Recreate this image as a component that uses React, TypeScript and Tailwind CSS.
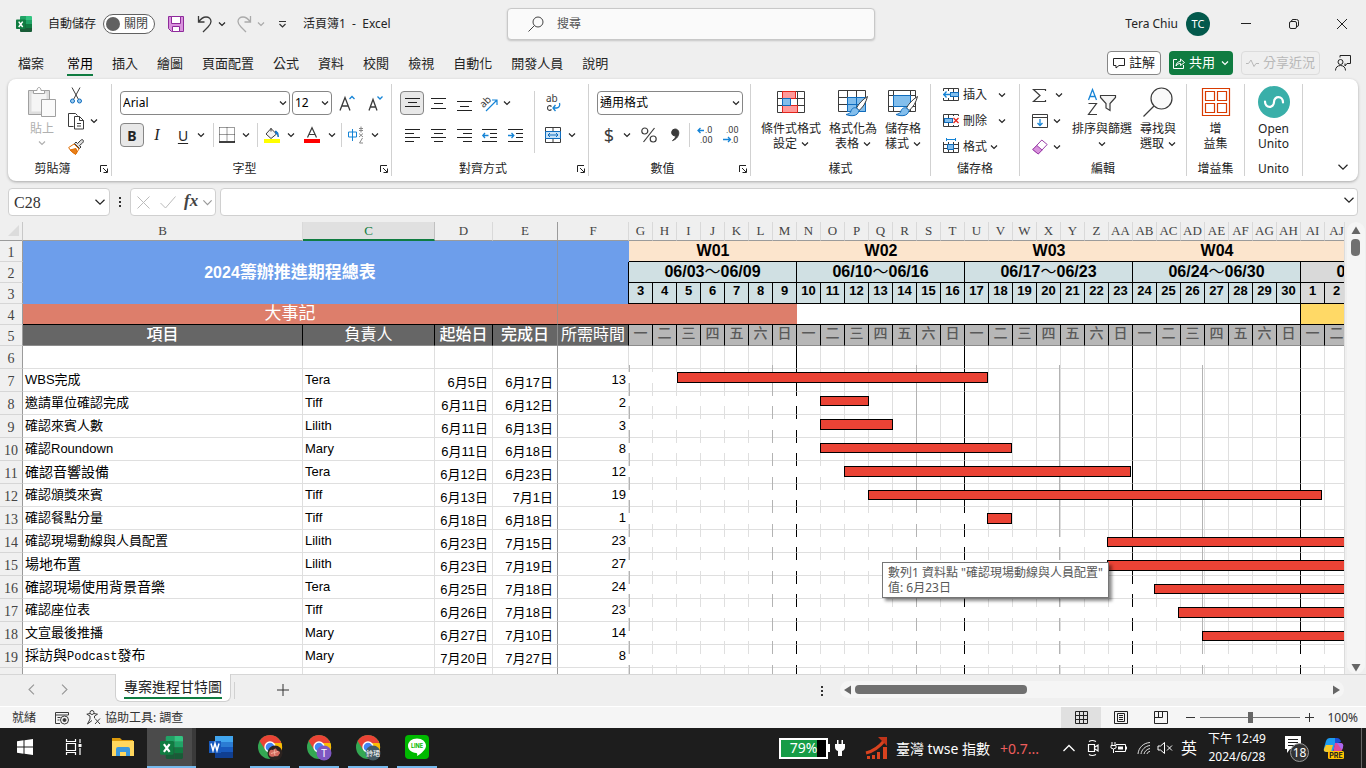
import React from "react";

const UI = "font-['Noto_Sans','Noto_Sans_CJK_TC',sans-serif]";

/* ---------- small shared pieces ---------- */

function Chevron({ className = "", size = 8 }: { className?: string; size?: number }) {
  return (
    <svg width={size} height={size} viewBox="0 0 8 8" fill="none" stroke="currentColor" strokeWidth="1.2" className={className} aria-hidden="true">
      <path d="M1 2.500 4 5.500 7 2.500" vectorEffect="non-scaling-stroke" />
    </svg>
  );
}

function Svg({ w = 20, h = 20, children, className = "" }: { w?: number; h?: number; children: React.ReactNode; className?: string }) {
  return (
    <svg width={w} height={h} viewBox={`0 0 ${w} ${h}`} fill="none" stroke="#3b3b3b" strokeWidth="1" className={`shrink-0 overflow-visible ${className}`} aria-hidden="true">
      {children}
    </svg>
  );
}

function Btn({ label, className = "", children }: { label: string; className?: string; children: React.ReactNode }) {
  return (
    <button type="button" aria-label={label} className={`flex h-6 shrink-0 items-center justify-center ${className}`}>
      {children}
    </button>
  );
}

function More({ label, className = "w-[10px]" }: { label: string; className?: string }) {
  return (
    <Btn label={label} className={className}>
      <Chevron className="shrink-0" />
    </Btn>
  );
}

function Sep({ className = "" }: { className?: string }) {
  return <span className={`w-px shrink-0 bg-[#d1d1d1] ${className}`} />;
}

function Group({ label, width, launcher = false, children }: { label: string; width: string; launcher?: boolean; children: React.ReactNode }) {
  return (
    <section aria-label={label} className={`flex shrink-0 ${width}`}>
      <div className="flex min-w-0 flex-1 flex-col">
        {children}
        <div className="mt-auto flex items-center pb-1">
          <span className="flex-1 text-center leading-4">{label}</span>
          {launcher && (
            <button type="button" aria-label={`${label}設定`} className="mr-[3px] ml-[3px]">
              <Svg w={8} h={8}>
                <path d="M.5 7V.5H7M3 3l4 4M7.500 3.500v4h-4" stroke="#222" />
              </Svg>
            </button>
          )}
        </div>
      </div>
      <Sep className="my-[5px]" />
    </section>
  );
}

function BigButton({ icon, lines, more = false, className = "" }: { icon: React.ReactNode; lines: string[]; more?: boolean; className?: string }) {
  return (
    <button type="button" className={`flex shrink-0 flex-col items-center pt-2 whitespace-nowrap ${className}`}>
      <span className="mb-1 flex h-[30px] items-center">{icon}</span>
      {lines.map((l, i) => (
        <span key={i} className="flex h-[15px] items-center gap-1 leading-[15px]">
          {l}
          {more && i === lines.length - 1 && <Chevron />}
        </span>
      ))}
    </button>
  );
}

function Combo({ label, value, className }: { label: string; value: string; className: string }) {
  return (
    <div className={`relative h-6 shrink-0 ${className}`}>
      <select aria-label={label} defaultValue={value} className="h-6 w-full appearance-none rounded border border-[#868686] bg-white pl-[2px] text-[12px] text-black">
        <option>{value}</option>
      </select>
      <Chevron className="pointer-events-none absolute top-2 right-[3px]" />
    </div>
  );
}

/* ---------- title bar ---------- */

function ExcelLogo({ size }: { size: number }) {
  return (
    <svg width={size} height={size} viewBox="0 0 16 16" aria-hidden="true">
      <path d="M4 1a1 1 0 0 1 1-1h5v4H4z" fill="#21a366" />
      <path d="M10 0h5a1 1 0 0 1 1 1v3h-6z" fill="#33c481" />
      <path d="M4 4h6v4H4z" fill="#107c41" />
      <path d="M10 4h6v4h-6z" fill="#21a366" />
      <path d="M4 8h6v8H5a1 1 0 0 1-1-1z" fill="#185c37" />
      <path d="M10 8h6v4h-6z" fill="#107c41" />
      <path d="M10 12h6v3a1 1 0 0 1-1 1h-5z" fill="#185c37" />
      <rect y="3.500" width="9.500" height="9.500" rx=".8" fill="#107c41" />
      <path d="m2.700 5.600 4 5.400M6.700 5.600l-4 5.400" stroke="#fff" strokeWidth="1.500" />
    </svg>
  );
}

function TitleBar() {
  return (
    <header className="grid h-12 shrink-0 grid-cols-[507fr_368fr_491fr] items-center text-[12px]">
      <div className="flex items-center whitespace-nowrap">
        <span className="ml-4"><ExcelLogo size={16} /></span>
        <span className="ml-4">自動儲存</span>
        <button type="button" role="switch" aria-checked="false" aria-label="自動儲存" className="ml-[7px] flex h-5 w-[52px] items-center gap-1 rounded-full border border-[#616161] bg-white pl-[2px] leading-none text-[#444]">
          <span className="h-[14px] w-[14px] rounded-full bg-[#616161]" />
          關閉
        </button>
        <button type="button" aria-label="儲存檔案" className="ml-[13px]">
          <Svg w={16} h={16}>
            <path d="M.5.5h15v15h-12l-3-3z" fill="#d993dd" stroke="#8e2a9b" />
            <path d="M3.500.5h9v7h-9zM4.500 10.500h7v5h-7z" fill="#fff" stroke="#8e2a9b" />
          </Svg>
        </button>
        <button type="button" aria-label="復原" className="ml-[13px]">
          <Svg w={16} h={18}>
            <path d="M1.500 1v6h6M1.500 7C4 3.500 6.500 2 9 2c3 0 5 2 5 4.500 0 2-1 3.500-3 5.500L6 17" strokeWidth="1.300" />
          </Svg>
        </button>
        <Chevron className="ml-[5px]" />
        <button type="button" aria-label="取消復原" className="ml-[10px] text-[#b0b0b0]">
          <Svg w={16} h={18}>
            <path d="M14.500 1v6h-6M14.500 7C12 3.500 9.500 2 7 2 4 2 2 4 2 6.500c0 2 1 3.500 3 5.500l5 5" stroke="#aaa" strokeWidth="1.300" />
          </Svg>
        </button>
        <Chevron className="ml-[5px] text-[#aaa]" />
        <button type="button" aria-label="自訂快速存取工具列" className="ml-[13px]">
          <Svg w={9} h={8}>
            <path d="M1 1.500h7M1.500 4l3 3 3-3" stroke="#333" strokeWidth="1.200" />
          </Svg>
        </button>
        <span className="ml-4">活頁簿1&nbsp; -&nbsp; Excel</span>
      </div>
      <label className="flex h-8 items-center rounded border border-[#c8c8c8] bg-[#fafafa] shadow-[0_1px_2px_rgba(0,0,0,.18)]">
        <Svg w={16} h={16} className="ml-5">
          <circle cx="10" cy="6" r="5" stroke="#444" />
          <path d="m6.500 9.500-6 6" stroke="#444" />
        </Svg>
        <input aria-label="搜尋" placeholder="搜尋" className="ml-[13px] min-w-0 flex-1 bg-transparent text-[12px] outline-none placeholder:text-[#555]" />
      </label>
      <div className="flex items-center justify-end">
        <span>Tera Chiu</span>
        <span className="mr-3 ml-2 flex h-6 w-6 items-center justify-center rounded-full bg-[#03594c] text-[11px] text-white">TC</span>
        <Btn label="最小化" className="w-12"><Svg w={10} h={10}><path d="M0 4.500h10" stroke="#222" /></Svg></Btn>
        <Btn label="還原" className="w-12">
          <Svg w={10} h={10}>
            <rect x=".5" y="2.500" width="7" height="7" rx="1.500" stroke="#222" />
            <path d="M2.500 2.500V2Q2.700.5 4 .5h3.500q2 0 2 2V6q0 1.500-1.500 1.500h-.5" stroke="#222" />
          </Svg>
        </Btn>
        <Btn label="關閉" className="w-12"><Svg w={10} h={10}><path d="m0 0 10 10M10 0 0 10" stroke="#222" /></Svg></Btn>
      </div>
    </header>
  );
}

/* ---------- tab strip ---------- */

const TABS = ["插入", "繪圖", "頁面配置", "公式", "資料", "校閱", "檢視", "自動化", "開發人員", "說明"];

function TabStrip() {
  return (
    <nav className="flex h-[31px] shrink-0 items-center text-[13px] leading-[22px] whitespace-nowrap">
      <button type="button" className="mr-[23px] ml-[18px] border-b-2 border-transparent">檔案</button>
      <button type="button" className="border-b-2 border-[#107c41] text-black">常用</button>
      {TABS.map((t) => (
        <button key={t} type="button" className="ml-[19px] border-b-2 border-transparent">{t}</button>
      ))}
      <div className="mr-[15px] mb-[2px] ml-auto flex items-center gap-2 leading-none">
        <button type="button" className="flex h-6 items-center gap-1 rounded border border-[#868686] bg-white px-[5px]">
          <Svg w={12} h={12}><path d="M.5 1.500h11v7H6l-3 2.500V8.500H.5z" stroke="#222" /></Svg>
          註解
        </button>
        <button type="button" className="flex h-6 items-center gap-1 rounded bg-[#107c41] px-1 text-white">
          <Svg w={12} h={12}>
            <path d="M4 2.500H.5v9h10V8M3 9c.3-3 2-4.500 4.500-4.500V2L11.500 5.500 7.500 8.500V6.500C5.500 6.500 4 7.200 3 9z" stroke="#fff" />
          </Svg>
          共用
          <Chevron className="ml-[2px]" />
        </button>
        <button type="button" disabled className="flex h-6 items-center gap-1 rounded border border-[#dcdcdc] px-1 text-[#b8b8b8]">
          <Svg w={13} h={12}><path d="M0 6.500h2.500L5 3l3 6.500 2-3h3" stroke="#b8b8b8" /></Svg>
          分享近況
        </button>
        <button type="button" aria-label="意見反應" className="ml-[7px]">
          <Svg w={16} h={16}>
            <circle cx="5.500" cy="7" r="2.500" stroke="#222" />
            <path d="M.5 15.500c0-3 2-5 5-5s5 2 5 5M5 2.500v-2h10.500v8H12l-2 2.500V8.500" stroke="#222" />
          </Svg>
        </button>
      </div>
    </nav>
  );
}

/* ---------- ribbon ---------- */

function Lines({ d }: { d: string }) {
  return <Svg w={15} h={17}><path d={d} stroke="#222" /></Svg>;
}

function Brush() {
  return (
    <>
      <path d="M29.500 7.500c-5 3-9 7.500-11 11.500l2.500 2.500c4-3 7-8 8.500-14z" fill="#fff" stroke="#3b3b3b" />
      <path d="M18.500 19c-3-1-5 1-5.500 3-.5 2-2 3-5 3.500 5 2 12 2 13-4z" fill="#83beec" stroke="#0f6cbd" />
    </>
  );
}

function Ribbon() {
  return (
    <div className="mx-2 flex h-[102px] shrink-0 rounded-lg bg-white text-[12px] text-[#242424] shadow-[0_1px_3px_rgba(0,0,0,.3)]">
      <Group label="剪貼簿" width="w-[104px]" launcher>
        <div className="flex pl-4">
          <button type="button" disabled className="flex w-9 flex-col items-center pt-2 text-[#b0b0b0]">
            <Svg w={28} h={31}>
              <path d="M.5 3.500h21v24H.5z" fill="#dedede" stroke="#a0a0a0" />
              <path d="M3.500 6.500h15v18h-15z" fill="#f5f5f5" stroke="none" />
              <path d="M5.500 6.500v-3h3.500c0-4 4-4 4 0h3.500v3z" fill="#fff" stroke="#a0a0a0" />
              <path d="M13.500 12.500h14v17h-14z" fill="#fafafa" stroke="#a0a0a0" />
            </Svg>
            <span className="mt-[3px] leading-[15px]">貼上</span>
            <Chevron className="mt-[3px]" />
          </button>
          <div className="flex flex-col pt-1 pl-2">
            <Btn label="剪下" className="w-4">
              <Svg w={12} h={17}>
                <path d="m2 .5 6.500 12M10 .5 3.500 12.500" />
                <circle cx="2.500" cy="14" r="2" fill="#9ccbf0" stroke="#0f6cbd" />
                <circle cx="9.500" cy="14" r="2" fill="#9ccbf0" stroke="#0f6cbd" />
              </Svg>
            </Btn>
            <div className="mt-[2px] flex">
              <Btn label="複製" className="w-4">
                <Svg w={16} h={17}>
                  <path d="M5.500 13.500h-5V.5h7l2 2M6.500 3.500h5l4 4v8.500h-9zM11.500 3.500v4h4M9 10.500h4M9 13h4" fill="#fff" />
                </Svg>
              </Btn>
              <More label="複製選項" className="ml-[5px] w-[10px]" />
            </div>
            <Btn label="複製格式" className="mt-[2px] w-4">
              <Svg w={16} h={16}>
                <path d="M15 1c-1-1-2 0-3 1L9.500 4.500 8 3 6.500 4.500l5 5L13 8l-1.500-1.500L14.500 4c1-1 1.200-2.200.5-3z" fill="#ddd" />
                <path d="M6 5 .7 8.500c1.500 3 3.500 5 7 6.500L11 10z" fill="#fff" stroke="#e06c00" />
                <path d="m2 11 6-1.500 1 3.500-1.500 2.500z" fill="#e8801a" stroke="#e06c00" />
              </Svg>
            </Btn>
          </div>
        </div>
      </Group>

      <Group label="字型" width="w-[280px]" launcher>
        <div className="flex flex-col gap-2 pt-3 pl-2">
          <div className="flex gap-[2px]">
            <Combo label="字型" value="Arial" className="w-[170px]" />
            <Combo label="字型大小" value="12" className="w-10" />
            <Btn label="放大字型" className="w-[26px]">
              <Svg w={16} h={18}><path d="m1 16.500 5-13 5 13M2.800 12h6.500" strokeWidth="1.300" /><path d="m10.500 5 2.500-2.500L15.500 5" stroke="#1584d6" strokeWidth="1.300" /></Svg>
            </Btn>
            <Btn label="縮小字型" className="w-[26px]">
              <Svg w={16} h={18}><path d="m2 16.500 4-11 4 11M3.300 13h5.500" strokeWidth="1.300" /><path d="m10.500 2.500 2.500 2.500 2.500-2.500" stroke="#1584d6" strokeWidth="1.300" /></Svg>
            </Btn>
          </div>
          <div className="flex">
            <Btn label="粗體" className="w-6 rounded border border-[#868686] bg-[#e8e8e8] text-[14px] font-bold">B</Btn>
            <Btn label="斜體" className="w-[26px] font-['Liberation_Serif',serif] text-[16px] italic">I</Btn>
            <Btn label="底線" className="w-[26px] text-[14px] underline underline-offset-2">U</Btn>
            <More label="底線選項" />
            <Sep className="ml-[7px]" />
            <Btn label="框線" className="w-[26px]">
              <Svg w={16} h={16}>
                <path d="M.5.5h15v14M.5.5v14M8 .5v14M.5 7.500h15" strokeDasharray="1 1" />
                <path d="M0 15h16" stroke="#000" strokeWidth="1.500" />
              </Svg>
            </Btn>
            <More label="框線選項" className="w-3" />
            <Sep className="ml-[5px]" />
            <Btn label="填滿色彩" className="w-7">
              <Svg w={16} h={16}>
                <path d="m7 1.500 5.500 5.500L7 11.500 2 7zM7 4.500V1" fill="#f4f4f4" />
                <path d="M11.500 4c2 .5 3 2 2.700 6-.2-2-1-3-2.500-3.500z" fill="#1584d6" stroke="#0f6cbd" />
                <path d="M0 14h16" stroke="#ffff00" strokeWidth="4" />
              </Svg>
            </Btn>
            <More label="填滿色彩選項" />
            <Btn label="字型色彩" className="w-[32px]">
              <Svg w={16} h={16}>
                <path d="M3.500 10.500 8 .8l4.500 9.700M5 7.500h6" strokeWidth="1.200" />
                <path d="M0 14h16" stroke="#f00" strokeWidth="4" />
              </Svg>
            </Btn>
            <More label="字型色彩選項" className="w-2" />
            <Sep className="ml-[5px]" />
            <Btn label="顯示注音標示" className="w-[28px]">
              <Svg w={16} h={18}>
                <path d="M.5 6h8v5h-8zM4.500 3v12" stroke="#1584d6" />
                <path d="M11 2.500h4M11 4.500h4M13 .5v6M11 7.500l4 3.500M15 7.500 11 11M14.500 12l-3 5h3.500" stroke="#888" />
              </Svg>
            </Btn>
            <More label="注音選項" />
          </div>
        </div>
      </Group>

      <Group label="對齊方式" width="w-[197px]" launcher>
        <div className="flex pt-3 pl-2">
          <div className="flex flex-col gap-2">
            <div className="flex">
              <Btn label="靠上對齊" className="w-6 rounded border border-[#868686] bg-[#e8e8e8]"><Lines d="M0 3.500h15M3 7.500h9M0 11.500h15" /></Btn>
              <Btn label="置中對齊" className="w-7"><Lines d="M0 3.500h15M3 8.500h9M0 13.500h15" /></Btn>
              <Btn label="靠下對齊" className="w-6"><Lines d="M0 6.500h15M3 11.500h9M0 15.500h15" /></Btn>
              <Btn label="方向" className="w-[26px]">
                <Svg w={17} h={17}>
                  <g transform="rotate(-45 6 7)"><text x="-1" y="9" fontSize="10" fill="#3b3b3b" stroke="none" fontFamily="Noto Sans">ab</text></g>
                  <path d="m5 16 10.500-10.500M11 5h5v5" stroke="#1584d6" strokeWidth="1.200" />
                </Svg>
              </Btn>
              <More label="方向選項" />
            </div>
            <div className="flex">
              <Btn label="靠左" className="w-6"><Lines d="M0 2.500h15M0 6.500h9M0 10.500h15M0 14.500h9" /></Btn>
              <Btn label="置中" className="w-7"><Lines d="M0 2.500h15M3 6.500h9M0 10.500h15M3 14.500h9" /></Btn>
              <Btn label="靠右" className="w-6"><Lines d="M0 2.500h15M6 6.500h9M0 10.500h15M6 14.500h9" /></Btn>
              <Btn label="減少縮排" className="w-[26px]">
                <Svg w={15} h={17}><path d="M0 2.500h15M8 6.500h7M8 10.500h7M0 14.500h15" stroke="#222" /><path d="M6.500 8.500H1M3 6 .8 8.500 3 11" stroke="#1584d6" strokeWidth="1.300" /></Svg>
              </Btn>
              <Btn label="增加縮排" className="w-[26px]">
                <Svg w={15} h={17}><path d="M0 2.500h15M8 6.500h7M8 10.500h7M0 14.500h15" stroke="#222" /><path d="M0 8.500h5.500M3.500 6 5.800 8.500 3.500 11" stroke="#1584d6" strokeWidth="1.300" /></Svg>
              </Btn>
            </div>
          </div>
          <Sep className="ml-[6px] h-[62px]" />
          <div className="flex flex-col gap-2 pl-[6px]">
            <Btn label="自動換行" className="w-6">
              <Svg w={16} h={20}>
                <text x="1" y="9" fontSize="10" fill="#3b3b3b" stroke="none" fontFamily="Noto Sans">ab</text>
                <path d="M6.500 13.500c-1.500-1.500-4-1-4 1.500s2.500 3 4 1.500" strokeWidth="1.100" />
                <path d="M14.500 10c1 3-1 5-3 5H8M10.500 12 8 15l2.500 3" stroke="#1584d6" strokeWidth="1.300" />
              </Svg>
            </Btn>
            <div className="flex">
              <Btn label="跨欄置中" className="w-6">
                <Svg w={16} h={16}>
                  <path d="M.5.5h15v15H.5zM8 .5V4M8 12v3.500" />
                  <path d="M.5 4.500h15v7H.5z" fill="#c7e2f8" stroke="#0f6cbd" />
                  <path d="M3 8h10M5 6 3 8l2 2M11 6l2 2-2 2" stroke="#0f6cbd" />
                </Svg>
              </Btn>
              <More label="跨欄選項" className="ml-[2px] w-[10px]" />
            </div>
          </div>
        </div>
      </Group>

      <Group label="數值" width="w-[162px]" launcher>
        <div className="flex flex-col gap-2 pt-3 pl-2">
          <Combo label="數值格式" value="通用格式" className="w-[146px]" />
          <div className="flex">
            <Btn label="會計數字格式" className="w-6 text-[18px] text-[#3b3b3b]">$</Btn>
            <More label="會計選項" className="w-3" />
            <Btn label="百分比樣式" className="ml-[2px] w-7">
              <Svg w={16} h={16}><circle cx="3.800" cy="4" r="3" strokeWidth="1.200" /><circle cx="12.200" cy="12" r="3" strokeWidth="1.200" /><path d="m13.500 1-11 14" strokeWidth="1.200" /></Svg>
            </Btn>
            <Btn label="千分位樣式" className="w-6">
              <Svg w={10} h={14}><path d="M5 1a3.500 3.500 0 0 0-1 6.800c.8.200 1.500.1 2-.2-.3 2-1.500 3.500-3.500 5C6 11.500 8.800 8.500 8.800 4.800 8.800 2.500 7.200 1 5 1z" fill="#3b3b3b" /></Svg>
            </Btn>
            <Sep className="mr-[2px] ml-[2px]" />
            <Btn label="增加小數位數" className="w-[26px]">
              <Svg w={17} h={20}>
                <path d="M7 5.500H1M3.500 3 1 5.500 3.500 8" stroke="#1584d6" strokeWidth="1.300" />
                <text x="8" y="8" fontSize="9" fill="#3b3b3b" stroke="none" fontFamily="Roboto">.0</text>
                <text x="3" y="18" fontSize="9" fill="#3b3b3b" stroke="none" fontFamily="Roboto">.00</text>
              </Svg>
            </Btn>
            <Btn label="減少小數位數" className="w-[26px]">
              <Svg w={17} h={20}>
                <text x="3" y="8" fontSize="9" fill="#3b3b3b" stroke="none" fontFamily="Roboto">.00</text>
                <path d="M0 14.500h7M5 12l2.500 2.500L5 17" stroke="#1584d6" strokeWidth="1.300" />
                <text x="8" y="18" fontSize="9" fill="#3b3b3b" stroke="none" fontFamily="Roboto">.0</text>
              </Svg>
            </Btn>
          </div>
        </div>
      </Group>

      <Group label="樣式" width="w-[180px]">
        <div className="flex justify-between pr-[9px] pl-[10px]">
          <BigButton
            more
            lines={["條件式格式", "設定"]}
            icon={
              <Svg w={28} h={24}>
                <path d="M.5 1.500h27v21H.5zM5.500 1.500v21M20.500 1.500v21M.5 8.500h27M.5 15.500h27M13.500 1.500v21" />
                <path d="M5.500 1.500h13v7h-13zM5.500 15.500h15v7h-15z" fill="#ff9a9a" stroke="#e3241b" />
                <path d="M5.500 8.500h8v7h-8z" fill="#83beec" stroke="#0f6cbd" />
              </Svg>
            }
          />
          <BigButton
            more
            lines={["格式化為", "表格"]}
            icon={
              <Svg w={30} h={26}>
                <path d="M.5 1.500h27v21H.5zM9.500 1.500v21M18.500 1.500v21M.5 8.500h27M.5 15.500h27" />
                <path d="M9.500 8.500h18v14h-18zM18.500 8.500v14M9.500 15.500h18" fill="#83beec" stroke="#0f6cbd" />
                <Brush />
              </Svg>
            }
          />
          <BigButton
            more
            lines={["儲存格", "樣式"]}
            icon={
              <Svg w={30} h={26}>
                <path d="M.5 1.500h27v21H.5zM5.500 1.500v21M22.500 1.500v21M.5 6.500h27M.5 17.500h27" />
                <path d="M5.500 6.500h17v11h-17z" fill="#83beec" stroke="#0f6cbd" />
                <Brush />
              </Svg>
            }
          />
        </div>
      </Group>

      <Group label="儲存格" width="w-[89px]">
        <div className="flex flex-col pt-[3px] pl-3">
          {[
            ["插入", "ml-[11px]"],
            ["刪除", "ml-[11px]"],
            ["格式", "ml-[3px]"],
          ].map(([t, gap], i) => (
            <button key={t} type="button" className="flex h-[26px] items-center">
              <Svg w={16} h={16}>
                <path d="M.5 1.500h15v12H.5zM.5 5.500h15M.5 9.500h15M5.500 1.500v12M10.500 1.500v12" />
                {i === 0 && <><path d="M7.500 5.500h8v4h-8z" fill="#83beec" stroke="#0f6cbd" /><path d="M0 4h7v7H0z" fill="#fff" stroke="none" /><path d="M0 7.500h8M3.500 4.500.8 7.500l2.700 3" stroke="#1584d6" strokeWidth="1.300" /></>}
                {i === 1 && <><path d="M1.500 5.500h8v4h-8z" fill="#83beec" stroke="#0f6cbd" /><path d="M10 3h6v9h-6z" fill="#fff" stroke="none" /><path d="m10.500 5 5 5m0-5-5 5" stroke="#e3241b" strokeWidth="1.300" /></>}
                {i === 2 && <><path d="M0 0h16v3H0z" fill="#fff" stroke="none" /><path d="M4.500 5.500h6v5h-6z" fill="#83beec" stroke="#0f6cbd" /><path d="M3.500.5h9M3.500-1v3M12.500-1v3" stroke="#1584d6" /></>}
              </Svg>
              <span className="ml-1">{t}</span>
              <Chevron className={gap} />
            </button>
          ))}
        </div>
      </Group>

      <Group label="編輯" width="w-[167px]">
        <div className="flex">
          <div className="flex w-[50px] flex-col pt-[3px] pl-3">
            <button type="button" aria-label="加總" className="flex h-[26px] items-center gap-[7px]">
              <Svg w={16} h={15}><path d="M13.500 3V1.500h-12l6.500 6-6.500 6h12V12" strokeWidth="1.200" /></Svg>
              <Chevron className="shrink-0" />
            </button>
            <button type="button" aria-label="填滿" className="flex h-[26px] items-center gap-[5px]">
              <Svg w={16} h={14}><path d="M.5.5h15v13H.5zM.5 3.500h15" /><path d="M8 5v7M5.500 9 8 11.500 10.500 9" stroke="#1584d6" strokeWidth="1.300" /></Svg>
              <Chevron className="shrink-0" />
            </button>
            <button type="button" aria-label="清除" className="flex h-[26px] items-center gap-[5px]">
              <Svg w={16} h={16}>
                <path d="m.8 10.500 9-9.500 5.400 4.500-9 9.500z" fill="#fff" stroke="#9b3fa8" />
                <path d="m.8 10.500 4-4 5.400 4.500-4 4z" fill="#d993dd" stroke="#9b3fa8" />
              </Svg>
              <Chevron className="shrink-0" />
            </button>
          </div>
          <BigButton
            more
            lines={["排序與篩選", ""]}
            className="w-16"
            icon={
              <Svg w={30} h={28}>
                <path d="m1.500 12 4-10.500 4 10.500M3 8.500h5" stroke="#1584d6" strokeWidth="1.300" />
                <path d="M1.500 15.500h8l-8 11h8.500" strokeWidth="1.200" />
                <path d="M13.500 7.500h15v2l-5.500 6v7l-4-2.500v-4.500l-5.500-6z" fill="#f5f5f5" strokeWidth="1.200" />
              </Svg>
            }
          />
          <BigButton
            more
            lines={["尋找與", "選取"]}
            className="w-12"
            icon={
              <Svg w={30} h={30}>
                <circle cx="18.500" cy="11.500" r="10.500" fill="#fafafa" strokeWidth="1.200" />
                <path d="M11 19 .5 29.500" strokeWidth="1.300" />
              </Svg>
            }
          />
        </div>
      </Group>

      <Group label="增益集" width="w-[58px]">
        <BigButton
          lines={["增", "益集"]}
          icon={
            <Svg w={28} h={28}>
              <path d="M.5.500h27v27H.5zM3.500 3.500h9v9h-9zM15.500 3.500h9v9h-9zM3.500 15.500h9v9h-9zM15.500 15.500h9v9h-9z" stroke="#d83b01" strokeWidth="1.200" />
            </Svg>
          }
        />
      </Group>

      <Group label="Unito" width="w-[58px]">
        <BigButton
          lines={["Open", "Unito"]}
          icon={
            <Svg w={32} h={32}>
              <circle cx="16" cy="16" r="16" fill="#3aafa9" stroke="none" />
              <path d="M7 15.500c0 7 9 7 9 0.500s9-6.500 9 .500" stroke="#fff" strokeWidth="2.200" strokeLinecap="round" />
            </Svg>
          }
        />
      </Group>
      <div className="flex flex-1 items-end justify-end pr-[9px] pb-2">
        <button type="button" aria-label="收合功能區"><Chevron size={12} /></button>
      </div>
    </div>
  );
}

/* ---------- formula bar ---------- */

function FormulaBar() {
  return (
    <div className="mx-2 mt-[7px] flex h-7 shrink-0 items-stretch">
      <div className="relative w-[102px]">
        <input aria-label="名稱方塊" defaultValue="C28" className="h-7 w-full rounded border border-[#d0d0d0] bg-white pt-[2px] pl-[5px] font-['Liberation_Serif',serif] text-[16px] text-[#333]" />
        <Chevron size={12} className="pointer-events-none absolute top-2 right-1" />
      </div>
      <Svg w={20} h={28}><path d="M9 9h2v2H9zM9 13h2v2H9zM9 17h2v2H9z" fill="#333" stroke="none" /></Svg>
      <div className="flex w-[86px] items-center rounded border border-[#d0d0d0] bg-white pl-[6px]">
        <button type="button" aria-label="取消"><Svg w={13} h={13}><path d="m.5.5 12 12m0-12-12 12" stroke="#bbb" /></Svg></button>
        <button type="button" aria-label="輸入" className="ml-[10px]"><Svg w={16} h={13}><path d="m.5 7 5 5L15.500.5" stroke="#bbb" /></Svg></button>
        <button type="button" aria-label="插入函數" className="ml-2 pb-1 font-['Liberation_Serif',serif] text-[17px] leading-none font-bold text-[#444] italic">fx</button>
        <Chevron size={11} className="ml-1 shrink-0 text-[#999]" />
      </div>
      <div className="relative ml-1 flex-1">
        <input aria-label="資料編輯列" className="h-7 w-full rounded border border-[#d0d0d0] bg-white px-2" />
        <Chevron size={12} className="pointer-events-none absolute top-[6px] right-[3px]" />
      </div>
    </div>
  );
}

/* ---------- sheet ---------- */

const DAY_COLS = ["G","H","I","J","K","L","M","N","O","P","Q","R","S","T","U","V","W","X","Y","Z","AA","AB","AC","AD","AE","AF","AG","AH","AI","AJ","AK","AL","AM","AN","AO"];
const WEEKDAYS = ["一", "二", "三", "四", "五", "六", "日"];
const WEEKS = [
  ["W01", "06/03", "06/09"],
  ["W02", "06/10", "06/16"],
  ["W03", "06/17", "06/23"],
  ["W04", "06/24", "06/30"],
  ["", "07/01", "07/07"],
];

type Task = { name: React.ReactNode; who: string; start: string; end: string; days: string; large?: boolean };
const TASKS: Task[] = [
  { name: "WBS完成", who: "Tera", start: "6月5日", end: "6月17日", days: "13" },
  { name: "邀請單位確認完成", who: "Tiff", start: "6月11日", end: "6月12日", days: "2" },
  { name: "確認來賓人數", who: "Lilith", start: "6月11日", end: "6月13日", days: "3" },
  { name: "確認Roundown", who: "Mary", start: "6月11日", end: "6月18日", days: "8" },
  { name: "確認音響設備", who: "Tera", start: "6月12日", end: "6月23日", days: "12", large: true },
  { name: "確認頒獎來賓", who: "Tiff", start: "6月13日", end: "7月1日", days: "19" },
  { name: "確認餐點分量", who: "Tiff", start: "6月18日", end: "6月18日", days: "1" },
  { name: "確認現場動線與人員配置", who: "Lilith", start: "6月23日", end: "7月15日", days: "23" },
  { name: "場地布置", who: "Lilith", start: "6月23日", end: "7月19日", days: "27", large: true },
  { name: "確認現場使用背景音樂", who: "Tera", start: "6月25日", end: "7月18日", days: "24", large: true },
  { name: "確認座位表", who: "Tiff", start: "6月26日", end: "7月18日", days: "23" },
  { name: "文宣最後推播", who: "Mary", start: "6月27日", end: "7月10日", days: "14" },
  { name: <>採訪與<span className="font-['Liberation_Mono',monospace] text-[12px]">Podcast</span>發布</>, who: "Mary", start: "7月20日", end: "7月27日", days: "8", large: true },
];

const GRID = "border-r border-b border-[#dfdfdf]";

function RowHead({ n }: { n: number }) {
  return (
    <th scope="row" className="border-r border-b border-[#d6d6d6] border-r-[#9b9b9b] bg-[#f0f0f0] pt-1 text-center align-middle font-['Liberation_Serif',serif] text-[14px] leading-4 font-normal text-[#444]">
      {n}
    </th>
  );
}

function DayCells() {
  return (
    <>
      {DAY_COLS.map((c, i) => (
        <td key={c} className={i % 7 === 6 ? `${GRID} border-r-black` : GRID} />
      ))}
    </>
  );
}

/* bar: [left, right, top, height], in pixels from the chart's own corner */
const BARS: [number, number, number, number][] = [
  [49, 360, 7, 11],
  [192, 241, 31, 10],
  [192, 265, 54, 11],
  [192, 384, 78, 10],
  [216, 503, 101, 11],
  [240, 694, 125, 10],
  [359, 384, 148, 11],
  [479, 1031, 172, 10],
  [479, 1127, 195, 11],
  [526, 1102, 219, 10],
  [550, 1102, 242, 11],
  [574, 910, 266, 10],
  [1127, 1319, 289, 11],
];

function GanttChart() {
  return (
    <svg width="840" height="320" viewBox="0 0 840 320" shapeRendering="crispEdges" className="absolute top-[143px] left-[628px]" role="img" aria-label="專案進程甘特圖">
      {[1, 144, 288, 431, 574, 718].map((x) => (
        <rect key={x} x={x} y="0" width="1" height="320" fill="#b3b3b3" />
      ))}
      {BARS.map(([l, r, t, h], i) => (
        <g key={i}>
          <rect x="0" y={t} width={l} height={h} fill="#fff" />
          <rect x={l + 0.5} y={t + 0.5} width={r - l - 1} height={h - 1} fill="#ea4335" stroke="#000" />
        </g>
      ))}
    </svg>
  );
}

function Sheet() {
  const colHead = "border-r border-b border-[#d9d9d9] border-b-[#9b9b9b] p-0 text-center font-normal";
  const head5 = "border-r border-b border-black border-b-[#8c8c8c] bg-[#666] p-0 text-center text-[16px] leading-[18px] text-white";
  return (
    <div className="relative min-w-0 flex-1 overflow-hidden">
      <table className="w-[1469px] table-fixed border-separate border-spacing-0 font-['Liberation_Sans','Noto_Sans_CJK_TC',sans-serif] text-[13px] leading-4 text-black">
        <colgroup>
          <col className="w-[23px]" />
          <col className="w-[280px]" />
          <col className="w-[132px]" />
          <col className="w-[58px]" />
          <col className="w-[65px]" />
          <col className="w-[71px]" />
          {DAY_COLS.map((c) => <col key={c} className="w-[24px]" />)}
        </colgroup>
        <thead>
          <tr className="h-[19px] bg-[#efefef] font-['Liberation_Serif',serif] text-[13px] text-[#444]">
            <th aria-label="全選" className="border-r border-b border-[#c8c8c8] border-b-[#9b9b9b] p-0">
              <Svg w={20} h={12} className="block"><path d="M19 0v11H8z" fill="#dcdcdc" stroke="none" /></Svg>
            </th>
            <th scope="col" className={colHead}>B</th>
            <th scope="col" className="border-r border-b-2 border-[#c0c0c0] border-b-[#107c41] bg-[#e0e0e0] p-0 text-center font-normal text-[#107c41]">C</th>
            <th scope="col" className={colHead}>D</th>
            <th scope="col" className="border-r border-b border-[#9b9b9b] p-0 text-center font-normal">E</th>
            <th scope="col" className={colHead}>F</th>
            {DAY_COLS.map((c) => <th key={c} scope="col" className={colHead}>{c}</th>)}
          </tr>
        </thead>
        <tbody>
          <tr className="h-[21px] text-[16px] leading-[18px] font-bold">
            <RowHead n={1} />
            <td colSpan={4} rowSpan={3} className="border-r border-[#8b96a8] bg-[#6d9eeb] text-center text-white">2024<span className="text-[17px]">籌辦推進期程總表</span></td>
            <td rowSpan={3} className="bg-[#6d9eeb]" />
            {WEEKS.map(([w], i) => (
              <td key={i} colSpan={7} className="border-b border-black bg-[#fce5cd] p-0 text-center">{w}</td>
            ))}
          </tr>
          <tr className="h-[21px] text-[16px] leading-[18px] font-bold">
            <RowHead n={2} />
            {WEEKS.map(([, from, to], i) => (
              <td key={from} colSpan={7} className={`border-r border-b border-black p-0 text-center ${i === 4 ? "bg-[#d9d9d9]" : "bg-[#d0e0e3]"} ${i === 0 ? "shadow-[-1px_0_0_#000]" : ""}`}>
                {from}<span className="font-normal">～</span>{to}
              </td>
            ))}
          </tr>
          <tr className="h-[21px] font-bold">
            <RowHead n={3} />
            {DAY_COLS.map((c, i) => (
              <td key={c} className={`border-r border-b border-black p-0 text-center align-top ${i >= 28 ? "bg-[#d9d9d9]" : "bg-[#d0e0e3]"} ${i === 0 ? "shadow-[-1px_0_0_#000]" : ""}`}>
                {i < 28 ? i + 3 : i - 27}
              </td>
            ))}
          </tr>
          <tr className="h-[21px] text-[17px] leading-[18px]">
            <RowHead n={4} />
            <td colSpan={4} className="border-r border-b border-black border-r-[#a09088] bg-[#dd7e6b] p-0 text-center text-white">大事記</td>
            <td colSpan={8} className="border-b border-black bg-[#dd7e6b]" />
            <td colSpan={21} className="border-r border-b border-black bg-white" />
            <td colSpan={7} className="border-b border-black bg-[#ffd966]" />
          </tr>
          <tr className="h-[21px]">
            <RowHead n={5} />
            <th scope="col" className={`${head5} font-medium`}>項目</th>
            <th scope="col" className={`${head5} font-normal`}>負責人</th>
            <th scope="col" className={`${head5} font-medium`}>起始日</th>
            <th scope="col" className={`${head5} border-r-[#8c8c8c] font-medium`}>完成日</th>
            <th scope="col" className={`${head5} font-normal`}>所需時間</th>
            {DAY_COLS.map((c, i) => (
              <td key={c} className="border-r border-b border-black border-b-[#8c8c8c] bg-[#b7b7b7] p-0 text-center align-top text-[14px] font-medium text-[#595959]">
                {WEEKDAYS[i % 7]}
              </td>
            ))}
          </tr>
          <tr className="h-[23px]">
            <RowHead n={6} />
            <td className={GRID} /><td className={GRID} /><td className={GRID} />
            <td className={`${GRID} border-r-[#9b9b9b]`} /><td className={GRID} />
            <DayCells />
          </tr>
          {TASKS.map((t, i) => (
            <tr key={i} className="h-[23px]">
              <RowHead n={i + 7} />
              <td className={`${GRID} py-0 pr-0 pl-[2px] ${t.large ? "text-[14px]" : ""}`}>{t.name}</td>
              <td className={`${GRID} py-0 pr-0 pl-[2px]`}>{t.who}</td>
              <td className={`${GRID} py-0 pr-1 pl-0 text-right align-bottom`}>{t.start}</td>
              <td className={`${GRID} border-r-[#9b9b9b] py-0 pr-1 pl-0 text-right align-bottom`}>{t.end}</td>
              <td className={`${GRID} py-0 pr-[2px] pl-0 text-right`}>{t.days}</td>
              <DayCells />
            </tr>
          ))}
          <tr className="h-[23px]">
            <RowHead n={20} />
            <td className={GRID} /><td className={GRID} /><td className={GRID} />
            <td className={`${GRID} border-r-[#9b9b9b]`} /><td className={GRID} />
            <DayCells />
          </tr>
        </tbody>
      </table>
      <GanttChart />
      <div role="tooltip" className="absolute top-[340px] left-[882px] border border-[#767676] bg-white px-[5px] py-[2px] text-[12px] leading-[15px] whitespace-nowrap text-[#575757] shadow-[3px_3px_3px_rgba(0,0,0,.45)]">
        數列1 資料點 "確認現場動線與人員配置"<br />值: 6月23日
      </div>
    </div>
  );
}

function SheetArea() {
  return (
    <div className="mt-[6px] flex min-h-0 flex-1">
      <div className="flex min-w-0 flex-1 bg-white"><Sheet /></div>
      <div className="flex w-[22px] shrink-0 flex-col items-center border-l border-[#dcdcdc]">
        <div className="flex w-[18px] flex-1 flex-col items-center rounded-full bg-[#f5f5f5] pt-1 pb-[2px]">
          <Svg w={10} h={9}><path d="M5 .5 9.500 8h-9z" fill="#666" stroke="none" /></Svg>
          <span className="mt-1 h-[17px] w-[9px] rounded bg-[#707070]" />
          <Svg w={10} h={9} className="mt-auto"><path d="M5 8.500 9.500 1h-9z" fill="#666" stroke="none" /></Svg>
        </div>
      </div>
    </div>
  );
}

function SheetTabs() {
  return (
    <div className="flex h-8 shrink-0 border-t border-[#d6d6d6] text-[14px]">
      <div className="flex w-[115px] items-center gap-5 pb-[2px] pl-[25px] text-[#999]">
        <button type="button" aria-label="上一張工作表"><Chevron size={13} className="rotate-90" /></button>
        <button type="button" aria-label="下一張工作表"><Chevron size={13} className="-rotate-90" /></button>
      </div>
      <button type="button" className="-mt-px mb-1 rounded-b-md border-x border-b border-[#d0d0d0] bg-white px-2">
        <span className="block border-b-2 border-[#107c41] leading-[20px] whitespace-nowrap">專案進程甘特圖</span>
      </button>
      <Sep className="my-[7px] ml-[3px]" />
      <button type="button" aria-label="新工作表" className="ml-[42px] pb-[2px]">
        <Svg w={12} h={12}><path d="M6 0v12M0 6h12" stroke="#333" /></Svg>
      </button>
      <Svg w={4} h={32} className="ml-auto"><path d="M1 11h2v2H1zM1 15h2v2H1zM1 19h2v2H1z" fill="#333" stroke="none" /></Svg>
      <div className="mt-[6px] mr-[22px] ml-4 flex h-[17px] w-[504px] items-center rounded-full bg-[#f5f5f5] px-1">
        <Svg w={7} h={10}><path d="M7 .5v9L0 5z" fill="#666" stroke="none" /></Svg>
        <span className="ml-1 h-[9px] w-[172px] rounded bg-[#707070]" />
        <Svg w={7} h={10} className="ml-auto"><path d="M0 .5v9L7 5z" fill="#666" stroke="none" /></Svg>
      </div>
    </div>
  );
}

function StatusBar() {
  return (
    <footer className="flex h-[22px] shrink-0 items-center border-t border-white bg-[#f5f5f5] text-[12px] leading-none text-[#333]">
      <span className="ml-3">就緒</span>
      <button type="button" aria-label="錄製巨集" className="ml-[18px]">
        <Svg w={16} h={14}>
          <path d="M14.500 4V1.500H1.500v11H6M1.500 4h13M3.500 6.500h3M3.500 9h2" />
          <circle cx="10.500" cy="9" r="4" /><circle cx="10.500" cy="9" r="1.500" fill="#333" />
        </Svg>
      </button>
      <button type="button" className="ml-4 flex items-center gap-[3px]">
        <Svg w={16} h={15}>
          <circle cx="6" cy="2.500" r="2" />
          <path d="M4 3.500.8 4.200 4 6v3l-2.500 5L6 10.500M8 3.500l3.500.7L8.500 6v2M9 8.500l5 5.500m0-5.500L9 14" />
        </Svg>
        協助工具: 調查
      </button>
      <div className="ml-auto flex h-full items-center">
        <Btn label="標準模式" className="h-full w-10 bg-[#e0e0e0]"><Svg w={13} h={13}><path d="M.5.5h12v12H.5zM4.500.5v12M8.500.5v12M.5 4.500h12M.5 8.500h12" stroke="#222" /></Svg></Btn>
        <Btn label="整頁模式" className="w-10"><Svg w={14} h={13}><path d="M.5.5h13v12H.5zM3.500 2.500h7v8h-7zM5 4.500h4M5 6.500h4M5 8.500h4" stroke="#222" /></Svg></Btn>
        <Btn label="分頁預覽" className="w-10"><Svg w={14} h={13}><path d="M.5.5h13v12H.5zM4.500.5v6M8.500.5v6M.5 6.500h8" stroke="#222" /></Svg></Btn>
        <Btn label="縮小" className="ml-[5px] w-[9px]"><Svg w={9} h={9}><path d="M0 4.500h9" stroke="#333" /></Svg></Btn>
        <input
          type="range"
          aria-label="縮放"
          min={0}
          max={100}
          defaultValue={50}
          className="mx-[5px] h-3 w-[100px] appearance-none bg-[linear-gradient(#777,#777)] bg-[length:100%_1px] bg-center bg-no-repeat [&::-webkit-slider-thumb]:h-[11px] [&::-webkit-slider-thumb]:w-[5px] [&::-webkit-slider-thumb]:appearance-none [&::-webkit-slider-thumb]:bg-[#666]"
        />
        <Btn label="放大" className="w-[9px]"><Svg w={9} h={9}><path d="M0 4.500h9M4.500 0v9" stroke="#333" /></Svg></Btn>
        <span className="mr-2 ml-3 w-8 text-right">100%</span>
      </div>
    </footer>
  );
}

/* ---------- taskbar ---------- */

function ChromeIcon({ children }: { children: React.ReactNode }) {
  return (
    <svg width="24" height="24" viewBox="0 0 24 24" className="overflow-visible" aria-hidden="true">
      <circle cx="12" cy="12" r="12" fill="#34a853" />
      <path d="M12 12 22.400 6a12 12 0 0 1-10.400 18z" fill="#fbbc05" />
      <path d="M1.600 6a12 12 0 0 1 20.800 0z" fill="#ea4335" />
      <path d="M1.600 6h20.800L23.200 8H12l-5 6.500z" fill="#ea4335" />
      <path d="M12 8h11.200a12 12 0 0 1-3 13L12 24l5-9z" fill="#fbbc05" />
      <circle cx="12" cy="12" r="5.700" fill="#fff" />
      <circle cx="12" cy="12" r="4.300" fill="#4285f4" />
      {children}
    </svg>
  );
}

function TaskItem({ label, open = false, active = false, children }: { label: string; open?: boolean; active?: boolean; children: React.ReactNode }) {
  return (
    <button type="button" aria-label={label} className={`flex h-10 w-[49px] shrink-0 flex-col items-center ${active ? "bg-[#4b4b4b] shadow-[inset_-4px_0_0_#3a3a3a]" : ""}`}>
      <span className="flex h-[38px] items-center">{children}</span>
      {open && <span className={`h-[2px] bg-[#76b9ed] ${active ? "w-full" : "w-10"}`} />}
    </button>
  );
}

function Taskbar() {
  return (
    <div className="flex h-10 shrink-0 items-center overflow-hidden bg-[#1d1d1d] text-[12px] text-white">
      <TaskItem label="開始"><Svg w={16} h={16}><path d="M0 2.300 6.500 1.300v6.200H0zM7.500 1.200 16 0v7.500H7.500zM0 8.500h6.500v6.200L0 13.700zM7.500 8.500H16V16l-8.500-1.200z" fill="#fff" stroke="none" /></Svg></TaskItem>
      <TaskItem label="工作檢視"><Svg w={18} h={16}><path d="M1.500 0v2.500h9V0M1.500 16v-2.500h9V16M1.500 4.500h9v7h-9zM15 0v4M15 9v7" stroke="#fff" strokeWidth="1.200" /><path d="M13.500 5h3v3h-3z" fill="#fff" stroke="none" /></Svg></TaskItem>
      <TaskItem label="檔案總管">
        <Svg w={22} h={20}>
          <path d="M0 1h8l2 2h11v4H0z" fill="#dd9b0c" stroke="none" /><path d="M0 4h22v15H0z" fill="#ffd75e" stroke="none" />
          <path d="M4 19v-7q0-2 2-2h10q2 0 2 2v7h-4v-4H8v4z" fill="#3b98dd" stroke="none" />
        </Svg>
      </TaskItem>
      <TaskItem label="Excel" open active><ExcelLogo size={23} /></TaskItem>
      <TaskItem label="Word">
        <Svg w={24} h={22}>
          <path d="M6 0h18v6H6z" fill="#41a5ee" stroke="none" /><path d="M6 6h18v5H6z" fill="#2b7cd3" stroke="none" /><path d="M6 11h18v5H6z" fill="#185abd" stroke="none" /><path d="M6 16h18v6H6z" fill="#103f91" stroke="none" />
          <path d="M0 5h12v12H0z" fill="#185abd" stroke="none" /><path d="m2 7.500 2 7 2-7 2 7 2-7" stroke="#fff" strokeWidth="1.500" />
        </Svg>
      </TaskItem>
      <TaskItem label="Chrome" open>
        <ChromeIcon><circle cx="17" cy="18" r="7.500" fill="#2c2320" /><path d="M11 17.500c2-6 5 0 5-3 2-3 3 1 3 1 3 0 4 3 2 4-1 3-4 1-5 2-2 1-6 0-5-4z" fill="#d66a5e" /><path d="M13 18.500l7-2M16 14.500l1 6" stroke="#f3b3a0" /></ChromeIcon>
      </TaskItem>
      <TaskItem label="Chrome T" open>
        <ChromeIcon><circle cx="17" cy="18" r="7.500" fill="#7e57c2" /><text x="17" y="21.500" fontSize="10" textAnchor="middle" fill="#fff" fontFamily="Roboto">T</text></ChromeIcon>
      </TaskItem>
      <TaskItem label="Chrome 鈴珺" open>
        <ChromeIcon><circle cx="17" cy="18" r="7.500" fill="#455a64" /><text x="17" y="20.500" fontSize="7" textAnchor="middle" fill="#fff" fontFamily="Noto Sans CJK TC">鈴珺</text></ChromeIcon>
      </TaskItem>
      <TaskItem label="LINE" open>
        <svg width="24" height="24" viewBox="0 0 24 24" aria-hidden="true">
          <rect width="24" height="24" rx="4" fill="#00b900" />
          <path d="M12 3.500c5 0 9 3.200 9 7.200 0 3.500-4 7.300-9 10.300.5-2 .2-2.800-.8-3C6.500 17.500 3 14.700 3 10.700c0-4 4-7.200 9-7.200z" fill="#fff" />
          <text x="12" y="13" fontSize="5.500" fontWeight="bold" textAnchor="middle" fill="#00b900" fontFamily="Inter">LINE</text>
        </svg>
      </TaskItem>

      <div className="ml-auto flex items-center whitespace-nowrap">
        <div className="flex items-center">
          <span className="flex h-[21px] w-[49px] items-center justify-center border-2 border-white bg-[linear-gradient(90deg,#169c46_80%,#000_80%)] text-[14px] leading-none">79%</span>
          <span className="h-2 w-[2px] bg-white" />
        </div>
        <Svg w={10} h={16} className="ml-[5px]"><path d="M2 0h1.500v4h3V0H8v4h2v3q0 3-3 4v5H3v-5q-3-1-3-4V4h2z" fill="#fff" stroke="none" /></Svg>
        <Svg w={24} h={24} className="ml-5">
          <path d="M1 17C9 15 15 10 19 5" stroke="#d8431f" strokeWidth="3" /><path d="M13 1h9v9z" fill="#c0341a" stroke="none" />
          <path d="M2 20h3v3H2zM7 19h3v4H7zM12 16h3v7h-3zM18 11h4v12h-4z" fill="#d8431f" stroke="none" />
        </Svg>
        <span className="ml-[7px] text-[14px]">臺灣 twse 指數</span>
        <span className="ml-[10px] text-[14px] text-[#ee5d5d]">+0.7...</span>
        <div className="ml-6 flex items-center">
          <Svg w={12} h={12}><path d="m.5 9 5.500-5.500L11.500 9" stroke="#fff" strokeWidth="1.300" /></Svg>
          <Svg w={12} h={18} className="ml-3"><path d="M1.500 5.500h6v7h-6zM8 8l3-2v6l-3-2M2 2.500q3-2 7 0M2 15.500q3 2 7 0" stroke="#fff" strokeWidth="1.200" /></Svg>
          <Svg w={16} h={14} className="ml-3"><path d="M5 3.500h9.500v7H4M15.500 5.500v3M1 1v3M4 1v3M0 4.500h5V7q-2.500 2-5 0zM2.500 8v4" stroke="#fff" /><path d="M7 5.500h5v3H7z" fill="#fff" stroke="none" /></Svg>
          <Svg w={14} h={14} className="ml-[10px]"><path d="M1 13C1.500 7 6 2 13 1.500M4 13c.5-4 4-8 9-8.500M7 13c.5-2.500 3-5 6-5.500M10 13c.3-1.500 1.500-2.500 3-2.500" stroke="#ddd" /></Svg>
          <Svg w={16} h={14} className="ml-[6px]"><path d="M1 5v4h2.500L7.500 12.500v-11L3.500 5zM10 4.500l5 5m0-5-5 5" stroke="#fff" /></Svg>
          <span className="ml-2 text-[16px]">英</span>
        </div>
        <time className="ml-[10px] w-[60px] text-center leading-[18px]">下午 12:49<br />2024/6/28</time>
        <div className="relative ml-[18px] h-6 w-[26px]">
          <Svg w={17} h={17}><path d="M0 0h16v13H5l-3 4v-4H0z" fill="#fff" stroke="none" /><path d="M3 3.500h10M3 6.500h10M3 9.500h6" stroke="#1d1d1d" /></Svg>
          <span className="absolute top-[7px] left-[5px] flex h-[19px] w-[19px] items-center justify-center rounded-full border border-[#999] bg-[#333] text-[12px] leading-none">18</span>
        </div>
        <svg width="22" height="22" viewBox="0 0 22 22" className="ml-3" aria-hidden="true">
          <path d="M7 1h7l-4 14H4q-4 0-3-4l2-7q1-3 4-3z" fill="#1d9bf0" />
          <path d="M3 8h7l-2 7H4q-4 0-3-3z" fill="#f6c928" />
          <path d="M12 1h2q3 0 4 4l-6 2z" fill="#1b4fd8" />
          <path d="M12 6h5q4 0 3 4l-2 6h-8z" fill="#e0489c" />
          <path d="m14 6 3 0q4 0 3 4l-1 3z" fill="#a968f0" />
          <rect x="5" y="14" width="16" height="8" rx="1.500" fill="#ffc400" />
          <text x="13" y="20.500" fontSize="7" fontWeight="bold" textAnchor="middle" fill="#222" fontFamily="Inter">PRE</text>
        </svg>
        <span className="mr-1 ml-4 h-10 w-px bg-[#666]" />
      </div>
    </div>
  );
}

export default function App() {
  return (
    <div className={`flex h-screen flex-col overflow-hidden bg-[#efefef] text-[12px] text-[#242424] ${UI}`}>
      <TitleBar />
      <TabStrip />
      <Ribbon />
      <FormulaBar />
      <SheetArea />
      <SheetTabs />
      <StatusBar />
      <Taskbar />
    </div>
  );
}
